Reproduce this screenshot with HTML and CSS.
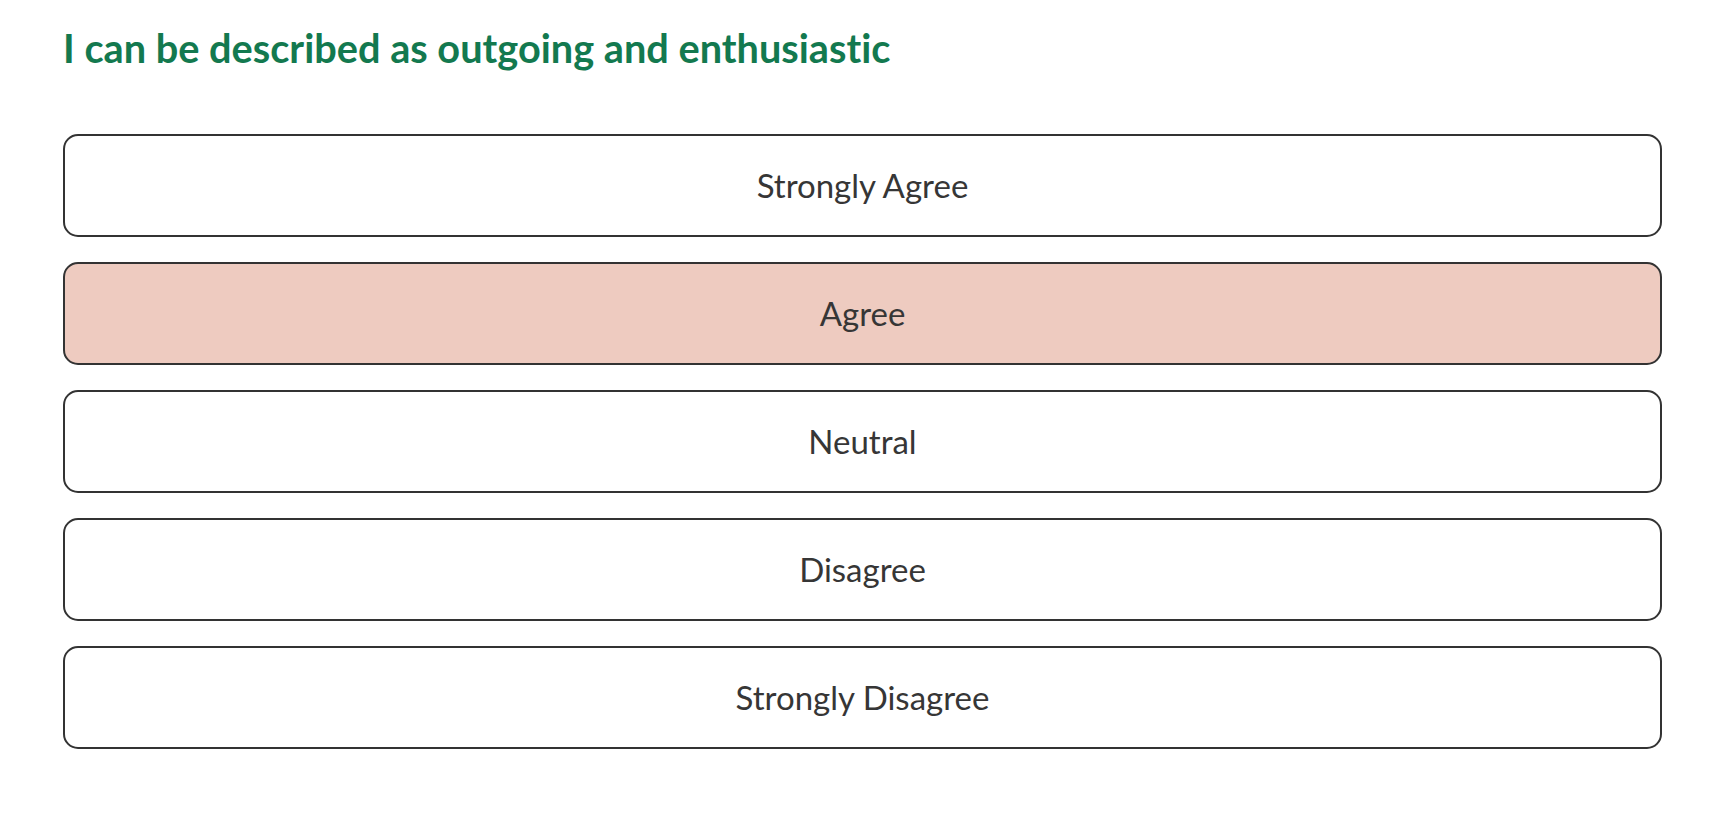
FILE: index.html
```html
<!DOCTYPE html>
<html lang="en">
<head>
<meta charset="utf-8">
<title>Question</title>
<link rel="stylesheet" href="styles.css">
</head>
<body>
<main class="question">
  <h1 class="question-title">I can be described as outgoing and enthusiastic</h1>
  <div class="options">
    <button class="option">Strongly Agree</button>
    <button class="option option-selected">Agree</button>
    <button class="option">Neutral</button>
    <button class="option">Disagree</button>
    <button class="option">Strongly Disagree</button>
  </div>
</main>
</body>
</html>
```

FILE: styles.css
```css
html, body {
  margin: 0;
  padding: 0;
  background: #ffffff;
}

body {
  font-family: Lato, "Open Sans", "Liberation Sans", sans-serif;
  color: #333333;
}

.question {
  width: 1599px;
  padding: 22px 0 0 63px;
}

.question-title {
  margin: 0;
  font-size: 39.7px;
  font-weight: 700;
  line-height: 52px;
  color: #13794f;
  font-variant-ligatures: none;
}

.options {
  display: flex;
  flex-direction: column;
  gap: 25.5px;
  margin-top: 60px;
}

.option {
  display: flex;
  align-items: center;
  justify-content: center;
  height: 102.5px;
  box-sizing: border-box;
  border: 2px solid #333333;
  border-radius: 15px;
  background: #ffffff;
  font-family: Lato, "Open Sans", "Liberation Sans", sans-serif;
  font-size: 33px;
  color: #363636;
  padding: 0;
  cursor: pointer;
}

.option-selected {
  background: #eecbc0;
}
```
